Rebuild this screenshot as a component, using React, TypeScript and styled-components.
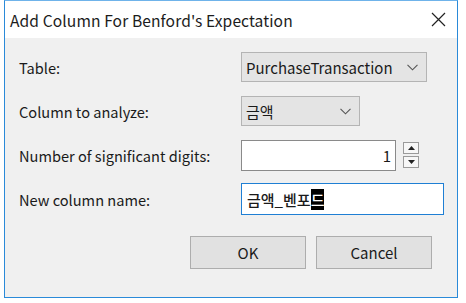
import React from "react";
import styled, { createGlobalStyle } from "styled-components";

const GlobalStyle = createGlobalStyle`
  html, body {
    margin: 0;
    padding: 0;
    background: #ffffff;
  }
  body {
    font-family: "Noto Sans CJK KR", "Noto Sans", sans-serif;
    color: #1a1a1a;
  }
`;

const Frame = styled.div`
  margin-left: 4px;
  width: 454px;
  height: 298px;
  box-sizing: border-box;
  border: 1px solid #2a8ad9;
  border-top-color: #6fb3ea;
  display: flex;
  flex-direction: column;
  background: #f0f0f0;
`;

const TitleBar = styled.div`
  height: 37px;
  flex: none;
  background: #ffffff;
  display: flex;
  align-items: center;
  justify-content: space-between;
  padding: 0 9px 0 5px;
`;

const Title = styled.span`
  font-size: 15.6px;
  color: #1c1c1c;
  letter-spacing: 0.1px;
`;

const CloseButton = styled.button`
  width: 20px;
  height: 20px;
  border: none;
  background: transparent;
  padding: 0;
  display: flex;
  align-items: center;
  justify-content: center;
`;

const Body = styled.div`
  flex: 1;
  padding: 14px 25px 0 14px;
  display: flex;
  flex-direction: column;
`;

const Form = styled.div`
  display: grid;
  grid-template-columns: 222px 1fr;
  grid-auto-rows: 30px;
  row-gap: 14px;
  align-items: center;
`;

const Label = styled.span`
  font-size: 14.6px;
  color: #1a1a1a;
`;

const Cell = styled.div`
  display: flex;
  align-items: center;
  height: 100%;
`;

const Combo = styled.div<{ $width: number }>`
  width: ${(p) => p.$width}px;
  height: 30px;
  box-sizing: border-box;
  border: 1px solid #b4b4b4;
  background: #e4e4e4;
  display: flex;
  align-items: center;
  justify-content: space-between;
  padding: 0 8px 0 4px;
  font-size: 15px;
  color: #1a1a1a;
`;

const NumberBox = styled.div`
  width: 155px;
  height: 31px;
  box-sizing: border-box;
  border: 1px solid #8a8a8a;
  background: #ffffff;
  display: flex;
  align-items: center;
  justify-content: flex-end;
  padding-right: 4px;
  font-size: 15px;
`;

const Spinner = styled.div`
  margin-left: 7px;
  display: flex;
  flex-direction: column;
  gap: 2px;
`;

const SpinButton = styled.div`
  width: 16px;
  height: 12px;
  box-sizing: border-box;
  border: 1px solid #9a9a9a;
  background: #f7f7f7;
  display: flex;
  align-items: center;
  justify-content: center;
`;

const TextBox = styled.div`
  width: 203px;
  height: 32px;
  box-sizing: border-box;
  border: 1px solid #1f7fd4;
  background: #ffffff;
  display: flex;
  align-items: center;
  padding-left: 5px;
  font-size: 15px;
  font-weight: 500;
`;

const Selected = styled.span`
  background: #000000;
  color: #ffffff;
`;

const Buttons = styled.div`
  margin-top: 22px;
  display: flex;
  justify-content: flex-end;
  gap: 10px;
`;

const Button = styled.button`
  width: 116px;
  height: 33px;
  box-sizing: border-box;
  border: 1px solid #adadad;
  background: #e1e1e1;
  font-family: inherit;
  font-size: 15px;
  color: #1a1a1a;
  padding: 0;
`;

const Chevron = () => (
  <svg width="11" height="7" viewBox="0 0 11 7">
    <path d="M0.5 0.8 L5.5 5.8 L10.5 0.8" fill="none" stroke="#555" strokeWidth="1.1" />
  </svg>
);

const Triangle = ({ up }: { up?: boolean }) => (
  <svg width="7" height="4" viewBox="0 0 7 4">
    <path d={up ? "M0 4 L3.5 0 L7 4 Z" : "M0 0 L3.5 4 L7 0 Z"} fill="#222" />
  </svg>
);

const App: React.FC = () => {
  return (
    <>
      <GlobalStyle />
      <Frame>
        <TitleBar>
          <Title>Add Column For Benford's Expectation</Title>
          <CloseButton>
            <svg width="15" height="15" viewBox="0 0 15 15">
              <path d="M1 1 L14 14 M14 1 L1 14" stroke="#222" strokeWidth="1.2" />
            </svg>
          </CloseButton>
        </TitleBar>
        <Body>
          <Form>
            <Label>Table:</Label>
            <Cell>
              <Combo $width={186}>
                <span>PurchaseTransaction</span>
                <Chevron />
              </Combo>
            </Cell>
            <Label>Column to analyze:</Label>
            <Cell>
              <Combo $width={119}>
                <span>금액</span>
                <Chevron />
              </Combo>
            </Cell>
            <Label>Number of significant digits:</Label>
            <Cell>
              <NumberBox>1</NumberBox>
              <Spinner>
                <SpinButton>
                  <Triangle up />
                </SpinButton>
                <SpinButton>
                  <Triangle />
                </SpinButton>
              </Spinner>
            </Cell>
            <Label>New column name:</Label>
            <Cell>
              <TextBox>
                금액_벤포<Selected>드</Selected>
              </TextBox>
            </Cell>
          </Form>
          <Buttons>
            <Button>OK</Button>
            <Button>Cancel</Button>
          </Buttons>
        </Body>
      </Frame>
    </>
  );
};

export default App;
